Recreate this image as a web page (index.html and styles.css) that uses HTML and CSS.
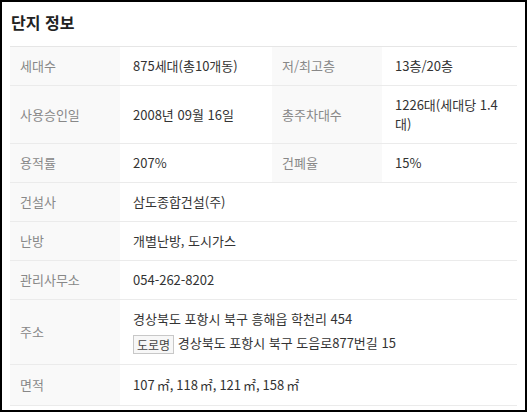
FILE: index.html
```html
<!DOCTYPE html>
<html lang="ko">
<head>
    <meta charset="UTF-8">
    <meta name="viewport" content="width=device-width, initial-scale=1.0">
    <title>단지 정보</title>
    <link rel="stylesheet" href="styles.css">
</head>
<body>
    <div id="container">
        <h2 class="title">단지 정보</h2>
        <table class="info">
            <colgroup>
                <col class="c-label">
                <col class="c-value">
                <col class="c-label">
                <col class="c-value2">
            </colgroup>
            <tr>
                <th>세대수</th>
                <td>875세대(총10개동)</td>
                <th>저/최고층</th>
                <td>13층/20층</td>
            </tr>
            <tr>
                <th>사용승인일</th>
                <td>2008년 09월 16일</td>
                <th>총주차대수</th>
                <td>1226대(세대당 1.4대)</td>
            </tr>
            <tr>
                <th>용적률</th>
                <td>207%</td>
                <th>건폐율</th>
                <td>15%</td>
            </tr>
            <tr>
                <th>건설사</th>
                <td colspan="3">삼도종합건설(주)</td>
            </tr>
            <tr>
                <th>난방</th>
                <td colspan="3">개별난방, 도시가스</td>
            </tr>
            <tr>
                <th>관리사무소</th>
                <td colspan="3">054-262-8202</td>
            </tr>
            <tr>
                <th>주소</th>
                <td colspan="3">
                    <div>경상북도 포항시 북구 흥해읍 학천리 454</div>
                    <div class="road"><span class="badge">도로명</span> 경상북도 포항시 북구 도음로877번길 15</div>
                </td>
            </tr>
            <tr class="last">
                <th>면적</th>
                <td colspan="3">107<span class="unit">㎡</span>, 118<span class="unit">㎡</span>, 121<span class="unit">㎡</span>, 158<span class="unit">㎡</span></td>
            </tr>
        </table>
    </div>
</body>
</html>
```

FILE: styles.css
```css
html, body {
    margin: 0;
    padding: 0;
    background: #fff;
}
body {
    font-family: "Noto Sans CJK KR", "Noto Sans", sans-serif;
    font-size: 13px;
    color: #333;
}
#container {
    box-sizing: border-box;
    width: 527px;
    height: 412px;
    border: 2px solid #000;
    padding: 0 8px;
    overflow: hidden;
}
.title {
    margin: 0;
    padding: 9px 0 13px 1px;
    font-size: 16px;
    line-height: 22px;
    font-weight: 700;
    color: #222;
    border-bottom: 1px solid #e6e6e6;
}
.info {
    width: 507px;
    border-collapse: collapse;
    table-layout: fixed;
}
.c-label {
    width: 110px;
}
.c-value {
    width: 152px;
}
.c-value2 {
    width: 135px;
}
.info th, .info td {
    padding: 9px 0 10px;
    line-height: 19px;
    text-align: left;
    vertical-align: middle;
    border-bottom: 1px solid #ebebeb;
}
.info th {
    padding-left: 10px;
    font-weight: 400;
    color: #888;
    background: #f9f9f9;
}
.info td {
    padding-left: 13px;
    padding-right: 10px;
    color: #333;
}
.info .last th, .info .last td {
    padding-top: 10px;
    padding-bottom: 11px;
}
.unit {
    margin-left: 2px;
}
.road {
    margin-top: 4px;
    line-height: 21px;
}
.badge {
    display: inline-block;
    box-sizing: border-box;
    height: 19px;
    padding: 0 3px;
    font-size: 12px;
    line-height: 17px;
    color: #444;
    background: #f7f7f7;
    border: 1px solid #c8c8c8;
    vertical-align: middle;
}
```
